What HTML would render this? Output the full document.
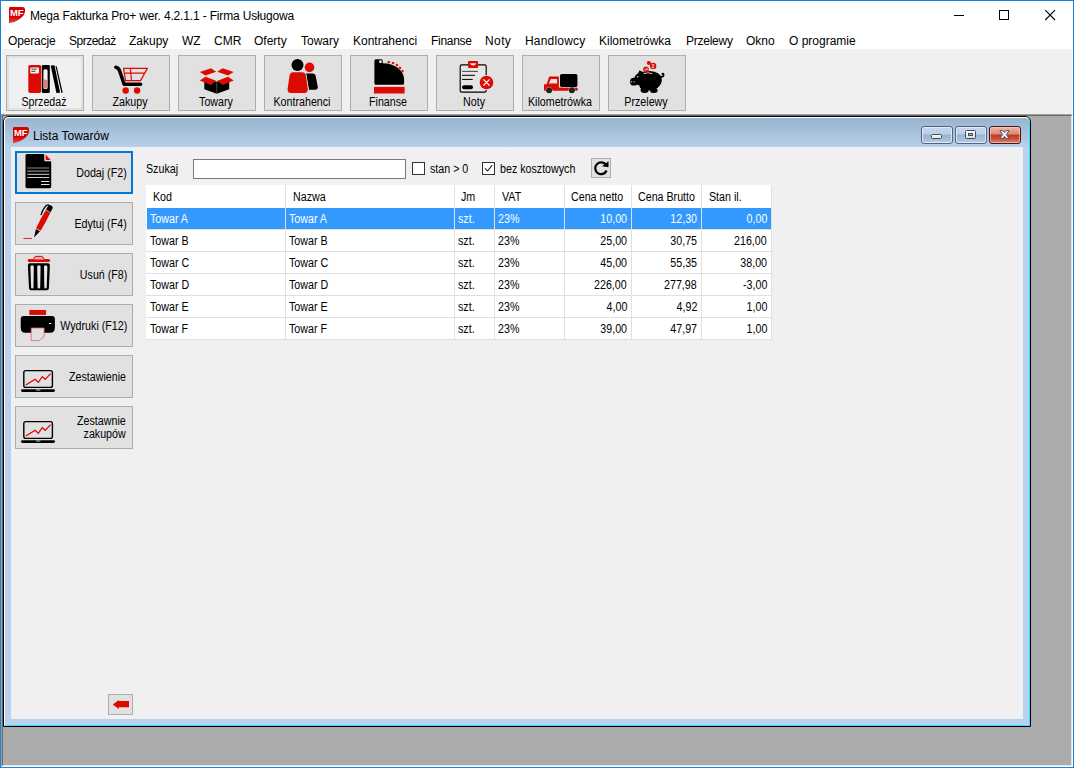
<!DOCTYPE html>
<html lang="pl">
<head>
<meta charset="utf-8">
<title>Mega Fakturka Pro+</title>
<style>
*{box-sizing:border-box;margin:0;padding:0}
html,body{width:1074px;height:768px;overflow:hidden;background:#fff}
body{position:relative;font-family:"Liberation Sans",sans-serif;font-size:12px;color:#000}
.t{display:inline-block;transform:scaleX(.89);transform-origin:0 50%}
.r .t{transform-origin:100% 50%}
.abs{position:absolute}
#win{position:absolute;left:0;top:0;width:1074px;height:768px;border:1px solid #1883d7;background:#fff}
#title{position:absolute;left:30px;top:9px;font-size:12px;line-height:15px;white-space:nowrap;letter-spacing:-0.16px}
.mi{position:absolute;top:34px;font-size:12px;line-height:15px;white-space:nowrap}
#toolbar{position:absolute;left:2px;top:49px;width:1070px;height:65px;background:#f0f0f0}
.tb{position:absolute;top:55px;width:78px;height:56px;border:1px solid #adadad;background:#e1e1e1}
.tb span{position:absolute;left:-1px;right:1px;top:40px;text-align:center;font-size:12px;line-height:13px;white-space:nowrap;transform:scaleX(.89);transform-origin:50% 50%}
.tb svg{position:absolute}
#mdi{position:absolute;left:1px;top:114px;width:1072px;height:653px;background:#ababab;border-top:1px solid #a0a0a0;border-left:1px solid #a0a0a0;border-right:1px solid #fff;border-bottom:1px solid #fff}
#mdi:before{content:"";position:absolute;left:0;top:0;right:0;bottom:0;border-top:1px solid #696969;border-left:1px solid #696969;border-right:1px solid #e3e3e3;border-bottom:1px solid #e3e3e3}
#child{position:absolute;left:3px;top:116px;width:1028px;height:611px;border:1px solid #000;border-radius:6px 6px 0 0;background:#b9d1ea}
#child .inner{position:absolute;left:0;top:0;right:0;bottom:0;border-left:1px solid #fff;border-top:1px solid #fff;border-right:1px solid #3ee0ff;border-bottom:1px solid #3ee0ff;border-radius:5px 5px 0 0;background:linear-gradient(#99b4d1 0,#b9d1ea 30px,#b9d1ea 100%)}
#ctitle{position:absolute;left:33px;top:129px;font-size:12px;line-height:15px;white-space:nowrap}
#content{position:absolute;left:11px;top:147px;width:1012px;height:572px;background:#f0f0f0}
.sb{position:absolute;left:15px;width:118px;height:43px;border:1px solid #adadad;background:#e1e1e1}
.sb.focus{border:2px solid #0078d7}
.sb span{position:absolute;right:5px;text-align:right;font-size:12px;line-height:13px;white-space:nowrap;transform:scaleX(.89);transform-origin:100% 50%}
.sb.focus span{right:4px}
.lbl{position:absolute;font-size:12px;line-height:13px;white-space:nowrap;transform:scaleX(.89);transform-origin:0 50%}
#grid{position:absolute;left:146px;top:185px;width:626px;height:155px;background:#fff}
.row{position:absolute;left:0;width:626px;height:22px;border-bottom:1px solid #e0e0e0}
.row.hd{height:23px;border-bottom:0}
.row.sel{background:#3399ff;color:#fff}
.c{position:absolute;top:0;height:100%;border-right:1px solid #e0e0e0;line-height:23px;padding:0 4px 0 4px;white-space:nowrap;overflow:hidden}
.hd .c{line-height:25px;padding-left:7px}
.c2,.c3,.c4{padding-left:3px}
.r{text-align:right}
.hd .c3,.hd .c5,.hd .c6{padding-left:6px}
.c1{left:0;width:140px}.c2{left:140px;width:169px}.c3{left:309px;width:40px}.c4{left:349px;width:70px}.c5{left:419px;width:67px}.c6{left:486px;width:70px}.c7{left:556px;width:70px}

.cb{position:absolute;top:126px;width:32px;height:18px;border:1px solid #55647e;border-radius:3px;background:linear-gradient(#c6d7ec 0,#bccfe8 44%,#98b3d4 50%,#a7c0de 80%,#bdd2ea 100%);box-shadow:inset 0 0 0 1px rgba(235,243,252,.75)}
.cb.x{border-color:#4a1422;background:linear-gradient(#efb3a6 0,#de8a77 44%,#bb3b21 50%,#c6553a 75%,#d98870 100%);box-shadow:inset 0 0 0 1px rgba(255,220,205,.55)}
</style>
</head>
<body>
<div id="win"></div>
<div id="title">Mega Fakturka Pro+ wer. 4.2.1.1 - Firma Usługowa</div>

<div class="mi" style="left:8px;letter-spacing:-0.15px">Operacje</div>
<div class="mi" style="left:69px;letter-spacing:-0.5px">Sprzedaż</div>
<div class="mi" style="left:129px">Zakupy</div>
<div class="mi" style="left:182px">WZ</div>
<div class="mi" style="left:214px">CMR</div>
<div class="mi" style="left:254px">Oferty</div>
<div class="mi" style="left:301px">Towary</div>
<div class="mi" style="left:353px">Kontrahenci</div>
<div class="mi" style="left:431px;letter-spacing:-0.3px">Finanse</div>
<div class="mi" style="left:485px;letter-spacing:0.4px">Noty</div>
<div class="mi" style="left:525px;letter-spacing:0.2px">Handlowcy</div>
<div class="mi" style="left:599px">Kilometrówka</div>
<div class="mi" style="left:686px;letter-spacing:-0.25px">Przelewy</div>
<div class="mi" style="left:746px">Okno</div>
<div class="mi" style="left:789px">O programie</div>

<div id="toolbar"></div>
<div class="tb" style="left:6px;background:#f0f0f0;box-shadow:inset 0 0 0 2px #e1e1e1"><span>Sprzedaż</span></div>
<div class="tb" style="left:92px"><span>Zakupy</span></div>
<div class="tb" style="left:178px"><span>Towary</span></div>
<div class="tb" style="left:264px"><span>Kontrahenci</span></div>
<div class="tb" style="left:350px"><span>Finanse</span></div>
<div class="tb" style="left:436px"><span>Noty</span></div>
<div class="tb" style="left:522px"><span>Kilometrówka</span></div>
<div class="tb" style="left:608px"><span>Przelewy</span></div>

<div id="mdi"></div>
<div id="child"><div class="inner"></div></div>
<div id="ctitle">Lista Towarów</div>
<div id="content"></div>
<div class="cb" style="left:921px"></div>
<div class="cb" style="left:955px"></div>
<div class="cb x" style="left:989px"></div>


<div class="sb focus" style="top:151px"><span style="top:14px">Dodaj (F2)</span></div>
<div class="sb" style="top:202px"><span style="top:15px">Edytuj (F4)</span></div>
<div class="sb" style="top:253px"><span style="top:15px">Usuń (F8)</span></div>
<div class="sb" style="top:304px"><span style="top:15px">Wydruki (F12)</span></div>
<div class="sb" style="top:355px"><span style="top:15px;right:6px">Zestawienie</span></div>
<div class="sb" style="top:406px"><span style="top:8px;right:6px">Zestawnie<br>zakupów</span></div>

<div class="lbl" style="left:146px;top:163px">Szukaj</div>
<div class="abs" style="left:193px;top:159px;width:213px;height:20px;border:1px solid #7a7a7a;background:#fff"></div>
<div class="abs" style="left:412px;top:162px;width:13px;height:13px;border:1px solid #333;background:#fff"></div>
<div class="lbl" style="left:430px;top:163px">stan &gt; 0</div>
<div class="abs" style="left:482px;top:162px;width:13px;height:13px;border:1px solid #333;background:#fff"></div>
<div class="lbl" style="left:500px;top:163px">bez kosztowych</div>
<div class="abs" style="left:591px;top:158px;width:20px;height:20px;border:1px solid #adadad;background:#e1e1e1"></div>

<div id="grid">
<div class="row hd" style="top:0"><div class="c c1"><span class="t">Kod</span></div><div class="c c2"><span class="t">Nazwa</span></div><div class="c c3"><span class="t">Jm</span></div><div class="c c4"><span class="t">VAT</span></div><div class="c c5"><span class="t">Cena netto</span></div><div class="c c6"><span class="t">Cena Brutto</span></div><div class="c c7"><span class="t">Stan il.</span></div></div>
<div class="row sel" style="top:23px"><div class="c c1"><span class="t">Towar A</span></div><div class="c c2"><span class="t">Towar A</span></div><div class="c c3"><span class="t">szt.</span></div><div class="c c4"><span class="t">23%</span></div><div class="c c5 r"><span class="t">10,00</span></div><div class="c c6 r"><span class="t">12,30</span></div><div class="c c7 r"><span class="t">0,00</span></div></div>
<div class="row" style="top:45px"><div class="c c1"><span class="t">Towar B</span></div><div class="c c2"><span class="t">Towar B</span></div><div class="c c3"><span class="t">szt.</span></div><div class="c c4"><span class="t">23%</span></div><div class="c c5 r"><span class="t">25,00</span></div><div class="c c6 r"><span class="t">30,75</span></div><div class="c c7 r"><span class="t">216,00</span></div></div>
<div class="row" style="top:67px"><div class="c c1"><span class="t">Towar C</span></div><div class="c c2"><span class="t">Towar C</span></div><div class="c c3"><span class="t">szt.</span></div><div class="c c4"><span class="t">23%</span></div><div class="c c5 r"><span class="t">45,00</span></div><div class="c c6 r"><span class="t">55,35</span></div><div class="c c7 r"><span class="t">38,00</span></div></div>
<div class="row" style="top:89px"><div class="c c1"><span class="t">Towar D</span></div><div class="c c2"><span class="t">Towar D</span></div><div class="c c3"><span class="t">szt.</span></div><div class="c c4"><span class="t">23%</span></div><div class="c c5 r"><span class="t">226,00</span></div><div class="c c6 r"><span class="t">277,98</span></div><div class="c c7 r"><span class="t">-3,00</span></div></div>
<div class="row" style="top:111px"><div class="c c1"><span class="t">Towar E</span></div><div class="c c2"><span class="t">Towar E</span></div><div class="c c3"><span class="t">szt.</span></div><div class="c c4"><span class="t">23%</span></div><div class="c c5 r"><span class="t">4,00</span></div><div class="c c6 r"><span class="t">4,92</span></div><div class="c c7 r"><span class="t">1,00</span></div></div>
<div class="row" style="top:133px"><div class="c c1"><span class="t">Towar F</span></div><div class="c c2"><span class="t">Towar F</span></div><div class="c c3"><span class="t">szt.</span></div><div class="c c4"><span class="t">23%</span></div><div class="c c5 r"><span class="t">39,00</span></div><div class="c c6 r"><span class="t">47,97</span></div><div class="c c7 r"><span class="t">1,00</span></div></div>
</div>

<div class="abs" style="left:146px;top:208px;width:1px;height:21px;background:#fff"></div>
<div class="abs" style="left:108px;top:694px;width:25px;height:21px;border:1px solid #adadad;background:#e1e1e1"></div>

<svg class="abs" style="left:0;top:0" width="1074" height="768" viewBox="0 0 1074 768">
<defs>
<linearGradient id="mfg" x1="0" y1="0" x2="0" y2="1"><stop offset="0" stop-color="#d60000"/><stop offset="0.6" stop-color="#d60000"/><stop offset="1" stop-color="#e24a4a"/></linearGradient>
<g id="mf"><path d="M1.2,0 H13.5 Q16,0 16,2.3 V4.6 C15.6,10 7.5,15.2 0.2,16.2 Q0,16.2 0,16 V1.2 Q0,0 1.2,0Z" fill="url(#mfg)"/><text x="1" y="8.9" font-family="Liberation Sans,sans-serif" font-weight="bold" font-size="8.3" fill="#fff" textLength="13.6" lengthAdjust="spacingAndGlyphs">MF</text></g>
<g id="laptop"><rect x="23.8" y="370.6" width="28.6" height="16.8" rx="2" fill="none" stroke="#000" stroke-width="1.4"/><rect x="21" y="389.2" width="34" height="2.8" rx="1.4" fill="#000"/><rect x="36" y="389.6" width="4.6" height="0.9" rx="0.4" fill="#c8c8c8"/><polyline points="25.7,384.9 35.2,379.3 38.3,382.4 42.3,376.6 45.2,379.3 50.6,373.6" fill="none" stroke="#dc0000" stroke-width="1.2"/></g>
</defs>
<!-- window icons -->
<use href="#mf" x="9" y="7"/>
<use href="#mf" x="13" y="127"/>
<!-- window controls -->
<path d="M954,15.5H964" stroke="#000" stroke-width="1"/>
<rect x="999.5" y="10.5" width="9" height="9" fill="none" stroke="#000" stroke-width="1"/>
<path d="M1045.2,10.2L1055,20M1055,10.2L1045.2,20" stroke="#000" stroke-width="1.1"/>

<!-- Sprzedaz -->
<rect x="28.3" y="65" width="13" height="28" rx="1.8" fill="#dc0a00"/>
<rect x="30.2" y="67.4" width="8.8" height="6.2" rx="1.3" fill="#f2f2f2"/>
<path d="M31.4,69.2H36.6M31.4,71.4H35.4" stroke="#444" stroke-width="1"/>
<rect x="41.9" y="65" width="7.9" height="28" rx="1.2" fill="#000"/>
<rect x="43.4" y="69.2" width="4.2" height="19.8" rx="1.6" fill="#f2f2f2"/>
<path d="M44,79 L47,80.5 V87.4 Q47,88.4 46,88.4 H45 Q44,88.4 44,87.4Z" fill="#e87a74"/>
<path d="M50.7,65.6 L54.5,65.2 L60.1,92.8 L56.4,93Z" fill="#000"/>
<path d="M55.5,66 L56.7,66.2 L62.7,92.5 L61.4,92.9Z" fill="#000"/>
<path d="M56.6,66.4 L57.2,66.2 L63,92 L62.7,92.6Z" fill="#000" opacity="0"/>

<!-- Zakupy -->
<path d="M115.8,67.2 Q118.5,67.4 119.7,71 L124.1,84.2 H140.6" fill="none" stroke="#000" stroke-width="3.5" stroke-linecap="round" stroke-linejoin="round"/>
<path d="M123.5,68.4 H147.4 L140.5,80.6 H125.6Z M124.4,73.1 H144.6 M130.3,68.4 L131.5,80.6" fill="none" stroke="#dc0a00" stroke-width="1.2" stroke-linejoin="round"/>
<circle cx="125.7" cy="90.5" r="3.2" fill="#dc0a00"/><circle cx="137.1" cy="90.5" r="3.2" fill="#dc0a00"/>

<!-- Towary -->
<path d="M204.3,81 L216.7,81.6 L229.2,81 V89.3 L216.7,93.8 L204.3,89.3Z" fill="#000"/>
<path d="M216.7,81.6V93.8" stroke="#777" stroke-width="0.6"/>
<g fill="#dc0a00"><path d="M199.8,72.1 L211,68.2 L216.2,71.8 L205.5,75.4Z"/><path d="M233.7,72.1 L222.5,68.2 L217.3,71.8 L228,75.4Z"/><path d="M199.8,80.4 L205.5,76.7 L216.2,80.7 L211,85.1Z"/><path d="M233.7,80.4 L228,76.7 L217.3,80.7 L222.5,85.1Z"/></g>

<!-- Kontrahenci -->
<path d="M306,73.4 H312.5 Q315.3,73.4 315.8,76.5 L317.8,87 Q318,89.8 315,89.8 H309Z" fill="#000"/>
<circle cx="309.5" cy="67.4" r="4.8" fill="#dc0a00"/>
<path d="M293,72.3 H302 Q305.5,72.3 306,76 L307.8,89 Q308,93 304.5,93 H291 Q287.3,93 287.6,89 L289.5,76 Q290,72.3 293,72.3Z" fill="#dc0a00" stroke="#e1e1e1" stroke-width="1.4" paint-order="stroke"/>
<circle cx="297.5" cy="65" r="6" fill="#000" stroke="#e1e1e1" stroke-width="1" paint-order="stroke"/>

<!-- Finanse -->
<path d="M375.9,59.3 H381.2 Q382.7,59.3 382.7,60.8 V63.2 C395,63.4 403.6,70 404.1,79 V83.3 Q404.1,84.8 402.6,84.8 H375.9 Q374.4,84.8 374.4,83.3 V60.8 Q374.4,59.3 375.9,59.3Z" fill="#000"/>
<circle cx="380.4" cy="61.7" r="1.4" fill="#f4f4f4"/>
<g fill="#dc0a00"><rect x="387.5" y="61" width="2.5" height="2.1" rx="0.7" transform="rotate(8 388.7 62)"/><rect x="391.8" y="62" width="2.5" height="2.1" rx="0.7" transform="rotate(20 393 63)"/><rect x="395.7" y="63.9" width="2.5" height="2.1" rx="0.7" transform="rotate(35 396.9 64.9)"/><rect x="398.8" y="66.8" width="2.5" height="2.1" rx="0.7" transform="rotate(50 400 67.8)"/><rect x="401.3" y="70" width="2.5" height="2.1" rx="0.7" transform="rotate(62 402.5 71)"/>
<rect x="374" y="86.9" width="30.6" height="6.6"/></g>

<!-- Noty -->
<rect x="460.2" y="64.9" width="26" height="27.2" rx="1.6" fill="#e5e5e5" stroke="#000" stroke-width="1.15"/>
<rect x="468" y="61.1" width="10.1" height="6.8" rx="1" fill="#dc0a00"/>
<path d="M470,63.2 H476.2 Q475.5,65.5 473.1,65.5 Q470.7,65.5 470,63.2Z" fill="#f0f0f0"/>
<path d="M462,71.4H477.9" stroke="#333" stroke-width="0.9"/><path d="M462,75.3H475M462,79.4H472.7" stroke="#000" stroke-width="1"/>
<rect x="462" y="85.3" width="11" height="4" rx="2" fill="#000"/>
<circle cx="486.5" cy="82.5" r="6.8" fill="#dc0a00" stroke="#e1e1e1" stroke-width="1.2" paint-order="stroke"/>
<path d="M483.4,79.4L489.6,85.6M489.6,79.4L483.4,85.6" stroke="#fff" stroke-width="1.3"/>

<!-- Kilometrowka -->
<path d="M544,84.2 H546.6 L549,77 Q549.2,76.4 550,76.4 H558.9 V87.6 H576.6 Q577.8,88.2 577.9,89.4 Q577.8,90.4 576.8,90.8 H544Z" fill="#dc0a00"/>
<path d="M550.8,79.1 H557.1 V83.5 H548.8Z" fill="#e4e4e4"/>
<rect x="560" y="74" width="17.4" height="12.9" rx="1.6" fill="#000" stroke="#e8e8e8" stroke-width="0.8" paint-order="stroke"/>
<circle cx="549.1" cy="90.3" r="3" fill="#222" stroke="#e1e1e1" stroke-width="1" paint-order="stroke"/><circle cx="571.9" cy="90.3" r="3" fill="#222" stroke="#e1e1e1" stroke-width="1" paint-order="stroke"/>

<!-- Przelewy -->
<g fill="#000"><ellipse cx="650" cy="80.2" rx="11.8" ry="9.3"/><ellipse cx="649" cy="86" rx="9.6" ry="4.4"/><circle cx="640.6" cy="79.2" r="6.4"/><circle cx="633.9" cy="81.7" r="3.9"/><path d="M637.6,74.4 L639.4,70.4 L644.6,72.4Z"/><ellipse cx="644.6" cy="90" rx="4.1" ry="2.9"/><ellipse cx="653.8" cy="90.5" rx="3.8" ry="2.5"/></g>
<path d="M660.4,76.6 Q663.6,77.4 663.6,74.8 Q663.5,73 662.3,74" fill="none" stroke="#000" stroke-width="1.8" stroke-linecap="round"/>
<path d="M643.6,73.7 Q648,71.9 652.3,73.6" fill="none" stroke="#e1e1e1" stroke-width="0.9"/>
<circle cx="637.6" cy="76.8" r="0.8" fill="#e8e8e8"/><circle cx="631.6" cy="81.7" r="0.6" fill="#e8e8e8"/><circle cx="634.2" cy="81.9" r="0.6" fill="#e8e8e8"/>
<g fill="#dc0a00"><circle cx="646" cy="69.4" r="2.9"/><circle cx="653.1" cy="65.9" r="3.2"/><circle cx="648.9" cy="63" r="2.1"/></g>
<text x="651.6" y="67.9" font-family="Liberation Sans,sans-serif" font-weight="bold" font-size="5.4" fill="#f4dada">2</text>
<text x="644.3" y="70.8" font-family="Liberation Sans,sans-serif" font-weight="bold" font-size="3.6" fill="#f4c4c4" transform="rotate(-25 646 69.4)">50</text>

<!-- Dodaj doc -->
<path d="M27,154 H43.6 L51.2,161.8 V186.6 Q51.2,188.2 49.6,188.2 H27 Q25.5,188.2 25.5,186.6 V155.6 Q25.5,154 27,154Z" fill="#000"/>
<path d="M44.2,154 V160 Q44.2,161.2 45.4,161.2 H51.2Z" fill="#e1e1e1"/>
<path d="M45.6,154.6 L50.8,160 H45.6Z" fill="#dc0a00"/>
<path d="M27.3,168H49.2M27.3,171.1H49.2" stroke="#8a8a8a" stroke-width="1.2"/><path d="M27.3,174.3H49.2M27.3,177.5H49.2" stroke="#cfcfcf" stroke-width="1"/><path d="M41,181.5H49.5M41,184.5H49.5" stroke="#e0e0e0" stroke-width="1"/>

<!-- Edytuj pen -->
<g transform="translate(34,237.6) rotate(28.2)">
<path d="M0,0 L-2.3,-8.4 H2.3Z" fill="#000"/>
<path d="M-2.6,-9.3 H2.6 Q3.2,-20 2.7,-29.6 H-2.7 Q-3.2,-20 -2.6,-9.3Z" fill="#dc0a00"/>
<path d="M-2.6,-30.2 H2.6 V-34 Q2.6,-36.4 0,-36.4 Q-2.6,-36.4 -2.6,-34Z" fill="#000"/>
<path d="M-2.4,-35.6 Q-4.6,-35.4 -4.9,-31 Q-5.3,-27 -4.6,-23.6" fill="none" stroke="#000" stroke-width="1.3" stroke-linecap="round"/>
</g>
<path d="M23.4,238.5H31.9" stroke="#dc2a2a" stroke-width="1"/>

<!-- Usun trash -->
<rect x="27.7" y="259" width="22.4" height="3" rx="1.5" fill="#dc0a00"/>
<path d="M33.4,259.4 Q34.4,256.4 36,256.4 H41.6 Q43.2,256.4 44.2,259.4" fill="#e8b0b0" stroke="#dc0a00" stroke-width="1"/>
<path d="M29.9,263.3 H47.9 Q50.1,263.3 49.9,265.5 L48.9,288.2 Q48.8,290.2 46.8,290.2 H31.1 Q29.1,290.2 29,288.2 L27.9,265.5 Q27.7,263.3 29.9,263.3Z" fill="#000"/>
<g fill="#e6e6e6"><path d="M30.4,266.8 Q30.4,265.3 32.1,265.3 Q33.8,265.3 33.8,266.8 L33.5,287.2 Q33.5,288.5 32.3,288.5 Q31.1,288.5 31.1,287.2Z"/><path d="M37.2,266.8 Q37.2,265.3 38.9,265.3 Q40.6,265.3 40.6,266.8 L40.2,287.2 Q40.2,288.5 38.9,288.5 Q37.6,288.5 37.6,287.2Z"/><path d="M44,266.8 Q44,265.3 45.7,265.3 Q47.4,265.3 47.4,266.8 L46.7,287.2 Q46.7,288.5 45.5,288.5 Q44.3,288.5 44.3,287.2Z"/></g>

<!-- Wydruki printer -->
<rect x="29.3" y="310" width="16.8" height="4.9" fill="#dc0a00"/>
<path d="M23.7,315.9 H51.9 Q54.9,315.9 54.9,318.9 V327 Q54.9,332.8 50.5,332.8 H25 Q20.7,332.8 20.7,327 V318.9 Q20.7,315.9 23.7,315.9Z" fill="#000"/>
<rect x="48.8" y="323.1" width="2.6" height="1" rx="0.5" fill="#fff"/>
<path d="M31.2,328 H44.1 V336.6 L38.9,340.6 H31.2Z" fill="#e1e1e1" stroke="#e2605c" stroke-width="0.8"/>

<!-- laptops -->
<use href="#laptop"/>
<use href="#laptop" y="51"/>

<!-- child caption glyphs -->
<linearGradient id="gw" x1="0" y1="0" x2="0" y2="1"><stop offset="0" stop-color="#fff"/><stop offset="1" stop-color="#dcdcdc"/></linearGradient>
<rect x="931.5" y="134.5" width="10" height="4" rx="1" fill="url(#gw)" stroke="#474b59" stroke-width="1"/>
<rect x="965.5" y="130.5" width="10" height="8" rx="1" fill="url(#gw)" stroke="#474b59" stroke-width="1"/>
<rect x="968.5" y="133.5" width="4" height="2" fill="#9fb9d8" stroke="#474b59" stroke-width="1"/>
<path d="M999.8,130.7 L1003,130.7 L1004.5,132.6 L1006,130.7 L1009.2,130.7 L1006.2,134.5 L1009.2,138.3 L1006,138.3 L1004.5,136.4 L1003,138.3 L999.8,138.3 L1002.8,134.5Z" fill="#fff" stroke="#4d5363" stroke-width="1" stroke-linejoin="round"/>
<!-- checkbox mark -->
<path d="M485,168.4 L487.6,171 L492.2,165.2" fill="none" stroke="#222" stroke-width="1.1"/>
<!-- refresh -->
<path d="M606.2,165.2 A5.9,5.9 0 1 0 606.6,170.5" fill="none" stroke="#000" stroke-width="2.2"/>
<path d="M608.5,161.2 V167.3 L602,166.3Z" fill="#000"/>
<!-- back arrow -->
<path d="M112.8,704.4 L118.8,699.9 V701.1 H129 V707.2 H118.8 V708.9Z" fill="#dc0a00"/>
</svg>
</body>
</html>
